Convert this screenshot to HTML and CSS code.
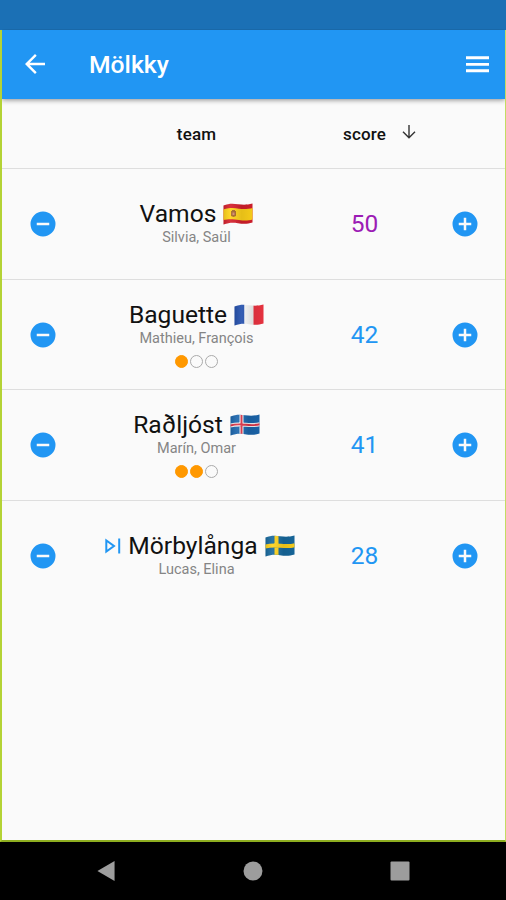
FILE: index.html
```html
<!DOCTYPE html>
<html lang="en">
<head>
<meta charset="utf-8">
<title>Mölkky</title>
<link rel="stylesheet" href="styles.css">
</head>
<body>
<svg class="defs" width="0" height="0" aria-hidden="true">
  <defs>
    <clipPath id="wave"><path d="M.5 2.500C6 .2 10 .5 15 1.200S24 2 29.500 .5V19.500C24 21.300 20 21 15 20.200S6 19.500 .5 21.500Z"/></clipPath>
    <linearGradient id="fold"><stop offset="0" stop-color="#000" stop-opacity=".12"/><stop offset=".25" stop-color="#fff" stop-opacity=".08"/><stop offset=".62" stop-color="#000" stop-opacity=".1"/><stop offset="1" stop-color="#000" stop-opacity=".04"/></linearGradient>
    <symbol id="minus" viewBox="0 0 24 24"><path d="M12 2a10 10 0 1 0 0 20 10 10 0 0 0 0-20Zm5 11H7v-2h10Z"/></symbol>
    <symbol id="plus" viewBox="0 0 24 24"><path d="M12 2a10 10 0 1 0 0 20 10 10 0 0 0 0-20Zm5 11h-4v4h-2v-4H7v-2h4V7h2v4h4Z"/></symbol>
  </defs>
</svg>
<div class="status"></div>
<div class="app">
  <header class="bar">
    <svg class="back" viewBox="0 0 20 20"><path d="M20 8.800H4.700l7-7L10 0 0 10l10 10 1.700-1.800-7-7H20Z"/></svg>
    <h1>Mölkky</h1>
    <svg class="menu" viewBox="0 0 23 17"><path d="M0 .3h23v2.900H0zM0 6.900h23v2.900H0zM0 13.300h23v2.900H0z"/></svg>
  </header>
  <main>
    <div class="row head">
      <span></span><span class="team">team</span>
      <span class="sort">score<svg viewBox="0 0 14 14"><path d="M7 0v12.500M1 6.800l6 6 6-6"/></svg></span>
    </div>
    <div class="row">
      <svg class="btn"><use href="#minus"/></svg>
      <div class="team">
        <div class="name"><span>Vamos</span><svg class="flag" viewBox="0 0 30 22"><g clip-path="url(#wave)"><path fill="#d41f2c" d="M0 0h30v22H0z"/><path fill="#ffd31a" d="M0 6.500C8 4.500 11 5 16 5.700S25 6 30 5v11.500c-6 1.500-9 1.200-14 .5S7 15.500 0 17Z"/><path fill="#a96a29" d="M8 8h1V7h3v1h1v5l-2.500 1L8 13Z"/><path fill="#d98a77" d="M9.500 9.500h2v2.500h-2z"/><path fill="url(#fold)" d="M0 0h30v22H0z"/></g></svg></div>
        <div class="players">Silvia, Saül</div>
      </div>
      <div class="score win">50</div>
      <svg class="btn"><use href="#plus"/></svg>
    </div>
    <div class="row">
      <svg class="btn"><use href="#minus"/></svg>
      <div class="team">
        <div class="name"><span>Baguette</span><svg class="flag" viewBox="0 0 30 22"><g clip-path="url(#wave)"><path fill="#2450ad" d="M0 0h10.500v22H0z"/><path fill="#f5f5f5" d="M10.500 0h9v22h-9z"/><path fill="#ef3442" d="M19.500 0H30v22H19.500z"/><path fill="url(#fold)" d="M0 0h30v22H0z"/></g></svg></div>
        <div class="players">Mathieu, François</div>
        <div class="dots"><i class="on"></i><i></i><i></i></div>
      </div>
      <div class="score">42</div>
      <svg class="btn"><use href="#plus"/></svg>
    </div>
    <div class="row">
      <svg class="btn"><use href="#minus"/></svg>
      <div class="team">
        <div class="name"><span>Raðljóst</span><svg class="flag" viewBox="0 0 30 22"><g clip-path="url(#wave)"><path fill="#1b66ad" d="M0 0h30v22H0z"/><path fill="none" stroke="#f3f3f5" stroke-width="4" d="M11.500 0v22M0 11.500C6 10 10 10.200 15 10.700s9 1 15-.5"/><path fill="none" stroke="#dc3448" stroke-width="1.900" d="M11.500 0v22M0 11.500C6 10 10 10.200 15 10.700s9 1 15-.5"/><path fill="url(#fold)" d="M0 0h30v22H0z"/></g></svg></div>
        <div class="players">Marín, Omar</div>
        <div class="dots"><i class="on"></i><i class="on"></i><i></i></div>
      </div>
      <div class="score">41</div>
      <svg class="btn"><use href="#plus"/></svg>
    </div>
    <div class="row">
      <svg class="btn"><use href="#minus"/></svg>
      <div class="team">
        <div class="name turn"><svg class="next" viewBox="0 0 16 16"><path d="M1.300 2.500v11L9 8Z"/><path d="M14.200 .5v15"/></svg><span>Mörbylånga</span><svg class="flag" viewBox="0 0 30 22"><g clip-path="url(#wave)"><path fill="#17699e" d="M0 0h30v22H0z"/><path fill="none" stroke="#ffd21c" stroke-width="4" d="M11.500 0v22M0 11.500C6 10 10 10.200 15 10.700s9 1 15-.5"/><path fill="url(#fold)" d="M0 0h30v22H0z"/></g></svg></div>
        <div class="players">Lucas, Elina</div>
      </div>
      <div class="score">28</div>
      <svg class="btn"><use href="#plus"/></svg>
    </div>
  </main>
</div>
<nav>
  <svg viewBox="0 0 18 21"><path d="M0 10.500 18 0v21Z"/></svg>
  <svg viewBox="0 0 19 19"><circle cx="9.500" cy="9.500" r="9"/></svg>
  <svg viewBox="0 0 20 20"><rect x=".5" y=".5" width="19" height="19" rx="1"/></svg>
</nav>
</body>
</html>
```
FILE: styles.css
```css
* { box-sizing: border-box; }
body {
  margin: 0;
  height: 900px;
  display: flex;
  flex-direction: column;
  overflow: hidden;
  font-family: Roboto, sans-serif;
  background: #000;
  color: #111;
}
.defs { position: absolute; }
svg { display: block; flex: none; }
.status { height: 29.500px; background: #1b70b5; }
.app {
  height: 812.500px;
  border: solid #b4d335;
  border-width: 0 1px 2px 2px;
  border-right-color: #c3dc62;
  border-bottom-color: #8eae20;
  background: #fafafa;
}
.bar {
  height: 69.500px;
  display: flex;
  align-items: center;
  padding: 0 16.500px 0 23px;
  background: #2196f3;
  box-shadow: 0 1px 5px rgba(0, 0, 0, .45);
  clip-path: inset(0 0 -10px 0);
  color: #fff;
}
.bar svg { fill: #fff; }
.back { width: 20px; height: 20px; }
h1 {
  margin: 0 auto 0 44px;
  padding-top: 2px;
  font-size: 24.700px;
  font-weight: 500;
  line-height: 30px;
}
.menu { width: 23px; height: 17px; }
.row {
  display: grid;
  grid-template-columns: 82px 225px 111px 1fr;
  align-items: center;
  height: 110.700px;
}
.row + .row { border-top: 1.500px solid #dedede; }
.row.head { height: 69px; font-size: 17px; font-weight: 500; letter-spacing: .15px; }
.head .team { text-align: center; }
.sort { display: flex; align-items: center; padding-left: 34px; white-space: nowrap; }
.sort svg {
  width: 14px;
  height: 14px;
  margin: -4px 0 0 16.500px;
  fill: none;
  stroke: #333;
  stroke-width: 1.400;
  overflow: visible;
}
.btn { width: 30px; height: 30px; fill: #2196f3; margin: 0 0 0 26px; }
.score + .btn { margin-left: 29.500px; }
div.team { display: flex; flex-direction: column; align-items: center; padding-bottom: 1px; }
.name {
  display: flex;
  align-items: center;
  gap: 7px;
  height: 28px;
  font-size: 24.600px;
  line-height: 28px;
  white-space: nowrap;
}
.turn { margin-left: 7px; }
.flag { width: 30px; height: 22px; }
.next { width: 16px; height: 16px; fill: none; stroke: #2196f3; stroke-width: 2; }
.players { padding-top: 1px; font-size: 14.500px; line-height: 18px; color: #858585; }
.dots { display: flex; align-items: flex-end; gap: 2px; height: 20px; }
.dots i { width: 13px; height: 13px; border: 1px solid #aaa; border-radius: 50%; }
.dots .on { background: #ff9800; border-color: #ff9800; }
.score { font-size: 24.500px; line-height: 28px; text-align: center; color: #2196f3; }
.win { color: #9c1cb5; }
nav {
  flex: 1;
  display: flex;
  align-items: center;
  justify-content: space-between;
  padding: 0 96px;
  background: #000;
}
nav svg { width: 20px; height: 20px; fill: #9d9d9d; }
```
